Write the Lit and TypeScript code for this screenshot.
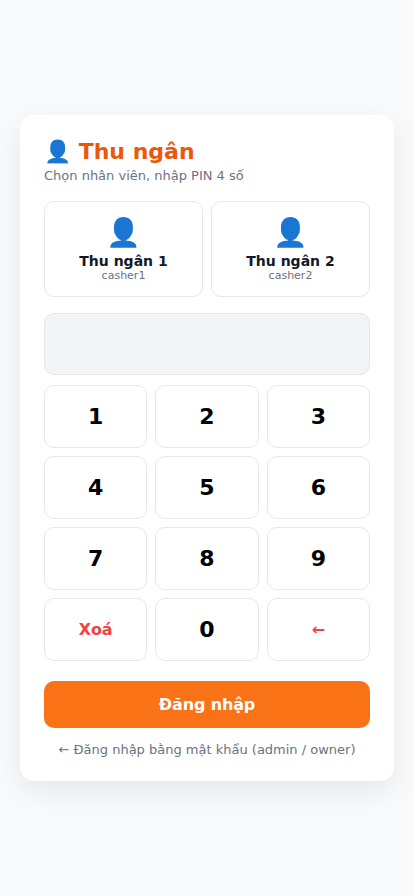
import { LitElement, html, css } from "lit";
import { customElement } from "lit/decorators.js";

@customElement("app-root")
export class AppRoot extends LitElement {
  static styles = css`
    :host { display: flex; align-items: center; justify-content: center; min-height: 100vh; box-sizing: border-box; padding: 20px; background: #f9fafb; font-family: "DejaVu Sans", sans-serif; color: #111827; }
    * { box-sizing: border-box; }
    .card { width: 100%; max-width: 400px; background: #fff; border-radius: 14px; padding: 24px; box-shadow: 0 10px 30px rgba(0, 0, 0, 0.08); }
    h1 { margin: 0; font-size: 22px; line-height: 26px; color: #ea580c; }
    .sub { font-size: 13px; line-height: 15px; color: #6b7280; margin: 3px 0 18px; }
    .staff { display: grid; grid-template-columns: 1fr 1fr; gap: 8px; margin-bottom: 16px; }
    button { font: inherit; background: #fff; border: 1px solid #e5e7eb; border-radius: 10px; padding: 0; color: #000; }
    .person { height: 96px; padding: 14px; color: #111827; text-align: center; }
    .avatar { font-size: 28px; line-height: 33px; margin-bottom: 4px; }
    .name { font-size: 14px; line-height: 16px; font-weight: 700; }
    .login { font-size: 11px; line-height: 13px; color: #6b7280; }
    .pin { height: 62px; background: #f3f4f6; border: 1px solid #e5e7eb; border-radius: 10px; margin-bottom: 10px; }
    .pad { display: grid; grid-template-columns: repeat(3, 1fr); gap: 8px; }
    .key { height: 63px; font-size: 22px; font-weight: 700; }
    .fn { font-size: 16px; letter-spacing: -0.15px; color: #ef4444; }
    .submit { display: block; width: 100%; height: 47px; margin-top: 20px; border: 0; background: #f97316; color: #fff; font-size: 16px; font-weight: 700; letter-spacing: -0.15px; }
    .alt { margin-top: 14px; text-align: center; font-size: 13px; line-height: 15px; color: #6b7280; }
  `;

  render() {
    return html`<main class="card">
      <h1>👤 Thu ngân</h1>
      <div class="sub">Chọn nhân viên, nhập PIN 4 số</div>
      <div class="staff">
        ${[1, 2].map((n) => html`<button class="person">
          <div class="avatar">👤</div>
          <div class="name">Thu ngân ${n}</div>
          <div class="login">casher${n}</div>
        </button>`)}
      </div>
      <div class="pin"></div>
      <div class="pad">
        ${["1", "2", "3", "4", "5", "6", "7", "8", "9", "Xoá", "0", "←"].map(
          (k) => html`<button class="key ${/\d/.test(k) ? "" : "fn"}">${k}</button>`
        )}
      </div>
      <button class="submit">Đăng nhập</button>
      <div class="alt">← Đăng nhập bằng mật khẩu (admin / owner)</div>
    </main>`;
  }
}
